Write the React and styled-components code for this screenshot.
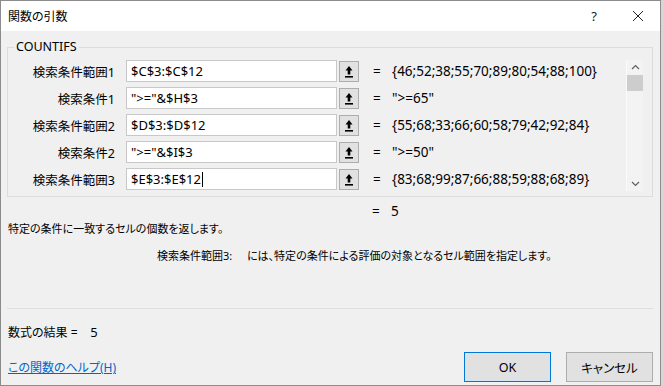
import React from "react";
import styled, { createGlobalStyle } from "styled-components";

const Global = createGlobalStyle`
  html, body { margin: 0; padding: 0; background: #d6d6d6; }
  body { font-family: "Noto Sans", "Noto Sans CJK JP", sans-serif; }
  * { box-sizing: border-box; }
`;

const Window = styled.div`
  width: 661px;
  height: 386px;
  background: #f0f0f0;
  border: 1px solid #8c8c8c;
  display: flex;
  flex-direction: column;
  font-family: "Noto Sans", "Noto Sans CJK JP", sans-serif;
  font-feature-settings: "palt";
  color: #000;
`;

const TitleBar = styled.div`
  height: 30px;
  background: #fff;
  display: flex;
  align-items: center;
  padding-left: 7px;
  font-size: 12px;
`;

const Title = styled.div`
  flex: 1;
`;

const TitleButton = styled.div`
  width: 44px;
  display: flex;
  justify-content: center;
  align-items: center;
  color: #222;
  font-size: ${(p) => p.$size || 13}px;
`;

const Body = styled.div`
  flex: 1;
  display: flex;
  flex-direction: column;
  padding: 8px 7px 0 6px;
`;

const Group = styled.fieldset`
  margin: 0;
  padding: 5px 9px 5px 0;
  border: 1px solid #dcdcdc;
  display: flex;
  align-items: flex-start;
`;

const Legend = styled.legend`
  margin-left: 6px;
  padding: 0 2px;
  font-size: 12.5px;
  line-height: 16px;
`;

const Rows = styled.div`
  flex: 1;
  display: grid;
  grid-template-columns: 118px 213px 20px 1fr;
  grid-auto-rows: 22px;
  row-gap: 5px;
  align-items: center;
`;

const Label = styled.div`
  font-size: 12.5px;
  margin-right: 11px;
  justify-self: end;
`;

const Input = styled.div`
  height: 22px;
  background: #fff;
  border: 1px solid #c8c8c8;
  font-size: 13px;
  display: flex;
  align-items: center;
  padding-left: 4px;
  margin-right: 2px;
  white-space: nowrap;
`;

const Caret = styled.span`
  display: inline-block;
  width: 1px;
  height: 15px;
  background: #000;
  margin-left: 1px;
`;

const RefButton = styled.div`
  width: 20px;
  height: 21px;
  background: #e1e1e1;
  border: 1px solid #adadad;
  display: flex;
  align-items: center;
  justify-content: center;
`;

const Value = styled.div`
  font-size: 13.5px;
  white-space: nowrap;
  display: flex;
  padding-left: 14px;
`;

const Eq = styled.span`
  width: 19px;
  display: inline-block;
`;

const Scrollbar = styled.div`
  width: 17px;
  height: 131px;
  display: flex;
  flex-direction: column;
  align-items: center;
  background: #f3f3f3;
  border-left: 1px solid #fafafa;
`;

const ScrollArrow = styled.div`
  height: 14px;
  display: flex;
  align-items: center;
  justify-content: center;
  color: #606060;
`;

const Thumb = styled.div`
  width: 16px;
  height: 16px;
  background: #cdcdcd;
  margin-top: 1px;
`;

const Spacer = styled.div`
  flex: 1;
`;

const Result = styled.div`
  font-size: 13.5px;
  padding-left: 365px;
  margin-top: 5px;
  display: flex;
`;

const Description = styled.div`
  font-size: 11px;
  margin-left: 1px;
`;

const ArgHelp = styled.div`
  font-size: 11px;
  margin-top: 11px;
  padding-left: 150px;
  display: flex;
`;

const ArgName = styled.span`
  flex: 0 0 90px;
`;

const Separator = styled.div`
  height: 1px;
  background: #dfdfdf;
  margin-top: 45px;
`;

const FormulaResult = styled.div`
  font-size: 12px;
  margin-top: 14px;
  margin-left: 1px;
  display: flex;
  align-items: baseline;
`;

const FormulaValue = styled.span`
  font-size: 13px;
  margin-left: 6px;
`;

const Footer = styled.div`
  display: flex;
  align-items: center;
  margin-top: 11px;
`;

const HelpLink = styled.a`
  font-size: 12px;
  color: #0066cc;
  text-decoration: underline;
  flex: 1;
  margin-left: 1px;
  cursor: pointer;
`;

const Button = styled.div`
  width: 87px;
  height: 30px;
  background: #e1e1e1;
  border: 1px solid ${(p) => (p.$primary ? "#0078d7" : "#adadad")};
  box-shadow: ${(p) => (p.$primary ? "inset 0 0 0 1px #cfe4f7" : "none")};
  display: flex;
  align-items: center;
  justify-content: center;
  font-size: 12.5px;
  margin-left: ${(p) => p.$gap || 0}px;
`;

const RefIcon = () => (
  <svg width="10" height="13" viewBox="0 0 10 13">
    <path d="M5 1 L8.5 5.5 H6.3 V9.5 H3.7 V5.5 H1.5 Z" fill="#000" />
    <rect x="1" y="11" width="8" height="1.6" fill="#000" />
  </svg>
);

const Chevron = ({ up }) => (
  <svg width="9" height="6" viewBox="0 0 9 6">
    <path
      d={up ? "M1 5 L4.5 1.5 L8 5" : "M1 1 L4.5 4.5 L8 1"}
      stroke="#606060"
      strokeWidth="1.2"
      fill="none"
    />
  </svg>
);

const args = [
  { label: "検索条件範囲1", input: "$C$3:$C$12", value: "{46;52;38;55;70;89;80;54;88;100}" },
  { label: "検索条件1", input: '">="&$H$3', value: '">=65"' },
  { label: "検索条件範囲2", input: "$D$3:$D$12", value: "{55;68;33;66;60;58;79;42;92;84}" },
  { label: "検索条件2", input: '">="&$I$3', value: '">=50"' },
  { label: "検索条件範囲3", input: "$E$3:$E$12", value: "{83;68;99;87;66;88;59;88;68;89}", caret: true },
];

export default function App() {
  return (
    <>
      <Global />
      <Window>
        <TitleBar>
          <Title>関数の引数</Title>
          <TitleButton $size={13}>?</TitleButton>
          <TitleButton $size={20}>
            <svg width="12" height="12" viewBox="0 0 12 12">
              <path d="M1 1 L11 11 M11 1 L1 11" stroke="#222" strokeWidth="1" />
            </svg>
          </TitleButton>
        </TitleBar>
        <Body>
          <Group>
            <Legend>COUNTIFS</Legend>
            <Rows>
              {args.map((a) => (
                <React.Fragment key={a.label}>
                  <Label>{a.label}</Label>
                  <Input>
                    {a.input}
                    {a.caret && <Caret />}
                  </Input>
                  <RefButton>
                    <RefIcon />
                  </RefButton>
                  <Value>
                    <Eq>=</Eq>
                    {a.value}
                  </Value>
                </React.Fragment>
              ))}
            </Rows>
            <Scrollbar>
              <ScrollArrow>
                <Chevron up />
              </ScrollArrow>
              <Thumb />
              <Spacer />
              <ScrollArrow>
                <Chevron />
              </ScrollArrow>
            </Scrollbar>
          </Group>
          <Result>
            <Eq>=</Eq>5
          </Result>
          <Description>特定の条件に一致するセルの個数を返します。</Description>
          <ArgHelp>
            <ArgName>検索条件範囲3:</ArgName>
            <span>には、特定の条件による評価の対象となるセル範囲を指定します。</span>
          </ArgHelp>
          <Separator />
          <FormulaResult>
            数式の結果 =<FormulaValue>&nbsp;&nbsp;5</FormulaValue>
          </FormulaResult>
          <Footer>
            <HelpLink>この関数のヘルプ(H)</HelpLink>
            <Button $primary>OK</Button>
            <Button $gap={15}>キャンセル</Button>
          </Footer>
        </Body>
      </Window>
    </>
  );
}
